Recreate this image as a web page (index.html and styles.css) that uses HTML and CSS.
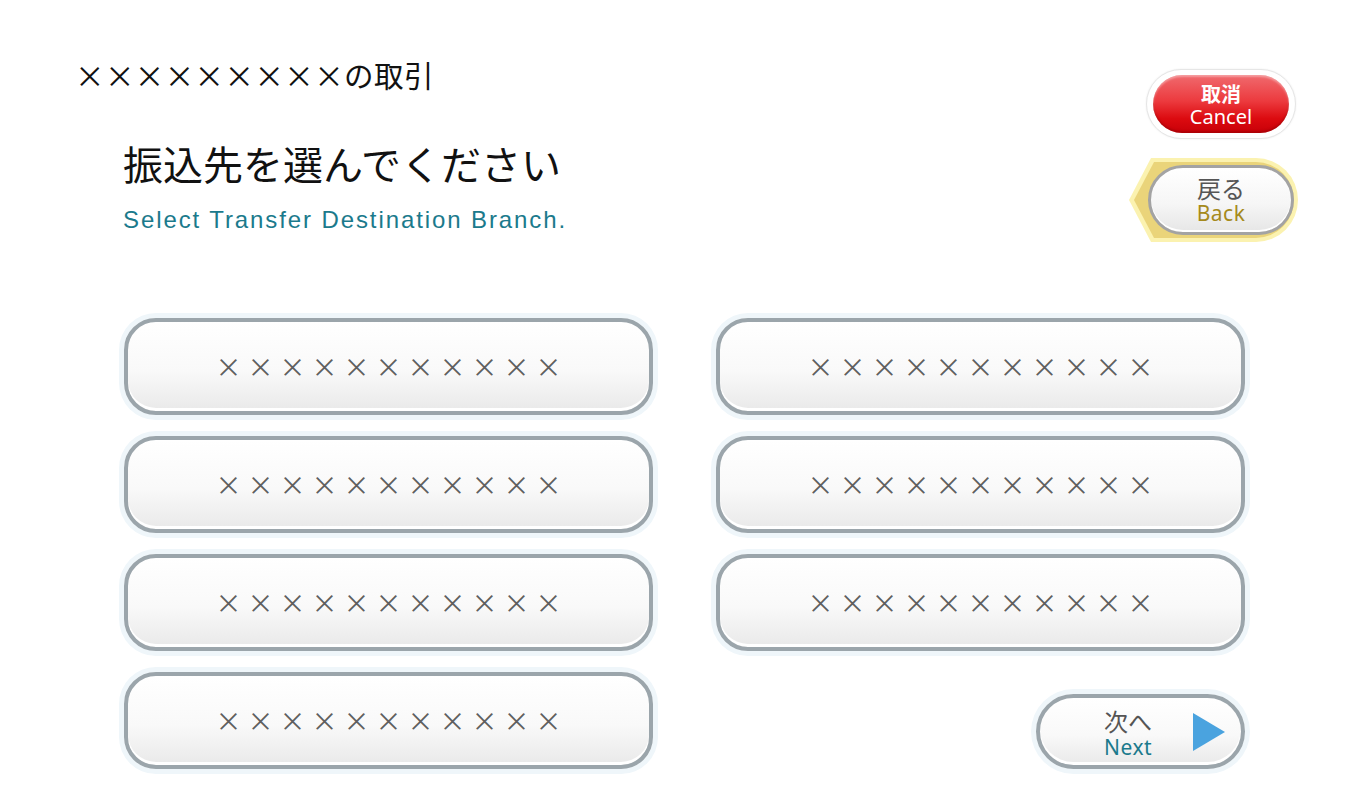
FILE: index.html
```html
<!DOCTYPE html>
<html lang="ja">
<head>
    <meta charset="UTF-8">
    <meta name="viewport" content="width=device-width, initial-scale=1.0">
    <title>振込先を選んでください</title>
    <link rel="stylesheet" href="styles.css">
</head>
<body>

    <div class="screen">
        <div class="top">
            <div class="intro">
                <p class="title">×××××××××の取引</p>
                <h1 class="heading">振込先を選んでください</h1>
                <p class="subtitle">Select Transfer Destination Branch.</p>
            </div>

            <div class="controls">
                <button class="cancel" type="button">
                    <span class="cancel-inner">
                        <span class="ja">取消</span>
                        <span class="en">Cancel</span>
                    </span>
                </button>

                <button class="back" type="button">
                    <svg class="back-tag" width="172" height="86" viewBox="0 0 172 86">
                        <path d="M1,43 L23,1 H128 A42,42 0 0 1 128,85 H23 Z" fill="#fbf2b0"/>
                        <path d="M6,43 L26,5 H128 A38,38 0 0 1 128,81 H26 Z" fill="#ead47a"/>
                    </svg>
                    <span class="back-pill">
                        <span class="ja">戻る</span>
                        <span class="en">Back</span>
                    </span>
                </button>
            </div>
        </div>

        <div class="branches">
            <button class="branch" type="button">×××××××××××</button>
            <button class="branch" type="button">×××××××××××</button>
            <button class="branch" type="button">×××××××××××</button>
            <button class="branch" type="button">×××××××××××</button>
            <button class="branch" type="button">×××××××××××</button>
            <button class="branch" type="button">×××××××××××</button>
            <button class="branch" type="button">×××××××××××</button>

            <button class="next" type="button">
                <span class="next-label">
                    <span class="ja">次へ</span>
                    <span class="en">Next</span>
                </span>
                <svg class="next-arrow" width="32" height="38" viewBox="0 0 32 38">
                    <path d="M0,0 L32,19 L0,38 Z" fill="#4aa3df"/>
                </svg>
            </button>
        </div>
    </div>

</body>
</html>
```

FILE: styles.css
```css
body {
    margin: 0;
    background: #fff;
    font-family: "Noto Sans CJK JP", "Noto Sans", sans-serif;
}
p, h1 {
    margin: 0;
}
button {
    font-family: inherit;
    cursor: pointer;
    padding: 0;
}
.screen {
    width: 1366px;
    height: 810px;
}
.top {
    display: flex;
    justify-content: space-between;
    height: 318px;
    padding: 0 66px 0 75px;
    box-sizing: border-box;
}
.title {
    margin-top: 57px;
    font-size: 29.5px;
    line-height: 34px;
    letter-spacing: 0.4px;
    color: #111;
}
.heading {
    margin: 49px 0 0 48px;
    font-size: 40px;
    line-height: 46px;
    font-weight: 400;
    color: #111;
}
.subtitle {
    margin: 20px 0 0 48px;
    font-family: "Liberation Sans", sans-serif;
    font-size: 24px;
    line-height: 28px;
    letter-spacing: 1.9px;
    color: #1b7a8c;
}

/* right side controls */
.controls {
    display: flex;
    flex-direction: column;
    align-items: flex-end;
    padding-top: 69px;
}
.cancel {
    width: 150px;
    height: 70px;
    border-radius: 35px;
    border: 1px solid #e6e6e6;
    background: #fff;
    box-shadow: 0 0 2px rgba(0, 0, 0, 0.08);
    display: flex;
    align-items: center;
    justify-content: center;
    margin-right: 4px;
}
.cancel-inner {
    width: 136px;
    height: 58px;
    border-radius: 29px;
    background: linear-gradient(#f06a6e, #ec3a3e 45%, #dc0b10 75%, #c80008);
    box-shadow: inset 0 2px 2px rgba(255, 255, 255, 0.35), inset 0 -2px 2px rgba(120, 0, 0, 0.35);
    display: flex;
    flex-direction: column;
    align-items: center;
    justify-content: center;
    gap: 3px;
    padding-top: 3px;
    box-sizing: border-box;
    color: #fff;
}
.cancel-inner .ja {
    font-size: 20px;
    line-height: 20px;
    font-weight: 700;
}
.cancel-inner .en {
    font-family: "Noto Sans", sans-serif;
    font-size: 20px;
    line-height: 20px;
}
.back {
    position: relative;
    width: 172px;
    height: 86px;
    margin-top: 18px;
    border: none;
    background: none;
}
.back-tag {
    position: absolute;
    left: 0;
    top: 0;
}
.back-pill {
    position: absolute;
    left: 20px;
    top: 8px;
    width: 146px;
    height: 70px;
    box-sizing: border-box;
    border-radius: 35px;
    border: 3px solid #a3a3a3;
    background: linear-gradient(#fff, #f6f6f6 55%, #e6e6e6);
    box-shadow: inset 0 -2px 0 #fff;
    display: flex;
    flex-direction: column;
    align-items: center;
    justify-content: center;
    gap: 3px;
}
.back-pill .ja {
    font-size: 24px;
    line-height: 24px;
    color: #555;
}
.back-pill .en {
    font-family: "Noto Sans", sans-serif;
    font-size: 21px;
    line-height: 21px;
    color: #a58a1c;
    letter-spacing: 0.5px;
}

/* branch grid */
.branches {
    display: grid;
    grid-template-columns: 529px 529px;
    grid-auto-rows: 97px;
    column-gap: 63px;
    row-gap: 21px;
    margin-left: 124px;
}
.branch {
    border: 4px solid #9ba5ab;
    border-radius: 32px;
    background: linear-gradient(#fff, #f9f9f9 55%, #e9e9e9);
    box-shadow: 0 0 0 5px #eff6fa, inset 0 -3px 0 #fff;
    font-size: 26px;
    letter-spacing: 6px;
    color: #5f5f5f;
    padding: 0 0 2px 6px;
}
.next {
    justify-self: end;
    align-self: end;
    width: 209px;
    height: 75px;
    border: 4px solid #9ba5ab;
    border-radius: 38px;
    background: linear-gradient(#fff, #f9f9f9 55%, #e9e9e9);
    box-shadow: 0 0 0 5px #eff6fa, inset 0 -3px 0 #fff;
    display: flex;
    align-items: center;
    padding: 0 16px 0 64px;
    box-sizing: border-box;
}
.next-label {
    display: flex;
    flex-direction: column;
    align-items: center;
    gap: 4px;
    padding-top: 2px;
}
.next-label .ja {
    font-size: 24px;
    line-height: 24px;
    color: #555;
}
.next-label .en {
    font-family: "Noto Sans", sans-serif;
    font-size: 21px;
    line-height: 20px;
    letter-spacing: 0.5px;
    color: #1b7a8c;
}
.next-arrow {
    margin-left: auto;
}
```
